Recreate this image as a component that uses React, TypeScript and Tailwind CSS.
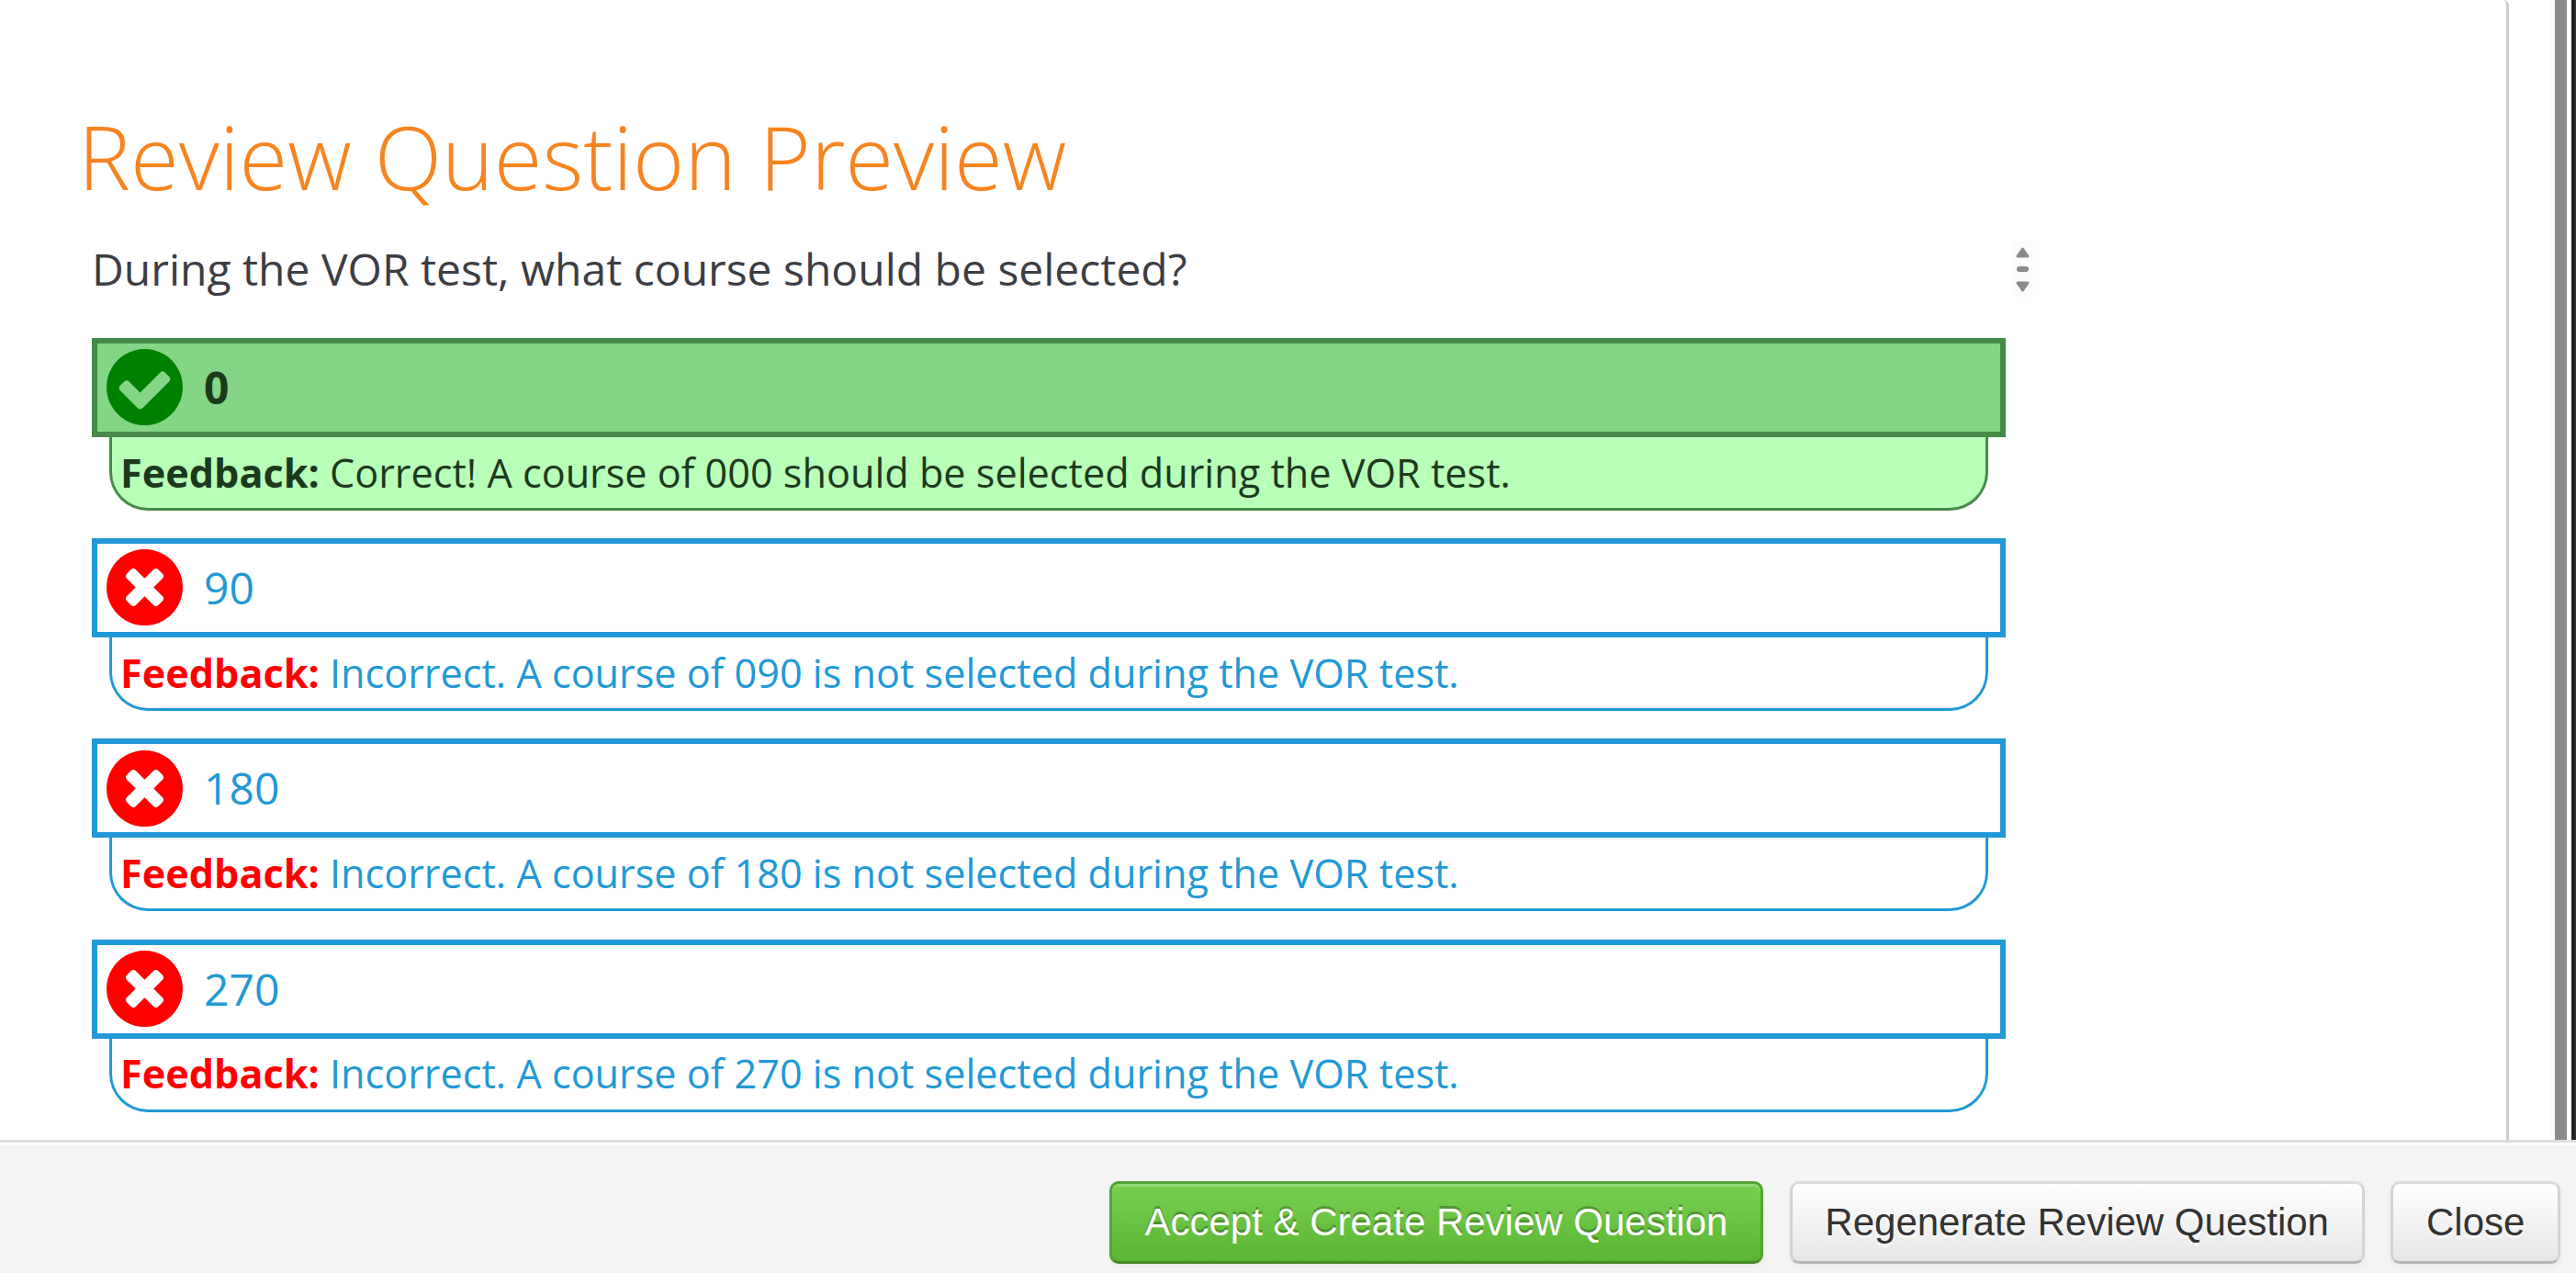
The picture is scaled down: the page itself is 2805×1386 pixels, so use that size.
import React from 'react';

interface Answer {
  label: string;
  feedback: string;
  correct: boolean;
}

const answers: Answer[] = [
  { label: '0', feedback: 'Correct! A course of 000 should be selected during the VOR test.', correct: true },
  { label: '90', feedback: 'Incorrect. A course of 090 is not selected during the VOR test.', correct: false },
  { label: '180', feedback: 'Incorrect. A course of 180 is not selected during the VOR test.', correct: false },
  { label: '270', feedback: 'Incorrect. A course of 270 is not selected during the VOR test.', correct: false },
];

const CheckCircle: React.FC = () => (
  <svg viewBox="128 128 1536 1536" className="w-[83px] h-[83px] -mt-[0.5px] shrink-0 fill-[#008000]">
    <path d="M1412 734q0-28-18-46l-91-90q-19-19-45-19t-45 19l-408 407-226-226q-19-19-45-19t-45 19l-91 90q-18 18-18 46 0 27 18 45l362 362q19 19 45 19 27 0 46-19l543-543q18-18 18-45zm252 162q0 209-103 385.5t-279.5 279.5-385.5 103-385.5-103-279.5-279.5-103-385.5 103-385.5 279.5-279.5 385.5-103 385.5 103 279.5 279.5 103 385.5z" />
  </svg>
);

const TimesCircle: React.FC = () => (
  <svg viewBox="128 128 1536 1536" className="w-[83px] h-[83px] -mt-[0.5px] shrink-0 fill-[#ff0000]">
    <path d="M1277 1122q0-26-19-45l-181-181 181-181q19-19 19-45 0-27-19-46l-90-90q-19-18-46-18-26 0-45 18l-181 181-181-181q-19-18-45-18-27 0-46 18l-90 90q-19 19-19 46 0 26 19 45l181 181-181 181q-19 19-19 45 0 27 19 46l90 90q19 18 46 18 26 0 45-18l181-181 181 181q19 18 45 18 27 0 46-18l90-90q19-19 19-46zm387-226q0 209-103 385.5t-279.5 279.5-385.5 103-385.5-103-279.5-279.5-103-385.5 103-385.5 279.5-279.5 385.5-103 385.5 103 279.5 279.5 103 385.5z" />
  </svg>
);

const DragHandle: React.FC = () => (
  <svg viewBox="0 0 23 60" className="w-[23px] h-[60px] bg-[#fcfcfc] fill-[#8b8b8b] stroke-[#8b8b8b]" strokeWidth="3" strokeLinejoin="round">
    <path d="M11.5 8L17 16H6z" />
    <path d="M11.5 53L17 45H6z" />
    <rect x="5" y="27" width="13" height="6" rx="3" stroke="none" />
  </svg>
);

const AnswerRow: React.FC<{ answer: Answer }> = ({ answer }) => {
  const { correct } = answer;
  return (
    <div className="w-[2084px]">
      <div
        className={`h-[108px] border-[6px] pl-[10px] flex items-center gap-[23px] text-[48px] ${
          correct ? 'border-[#468a48] bg-[#84d586] text-[#1b3a1b] font-bold' : 'border-[#2199d5] text-[#2199d5]'
        }`}
      >
        {correct ? <CheckCircle /> : <TimesCircle />}
        <span>{answer.label}</span>
      </div>
      <div
        className={`h-20 mx-[19px] border-[3px] border-t-0 rounded-b-[42px] pl-[9px] pt-[1.4px] flex items-center text-[43.2px] whitespace-pre ${
          correct ? 'border-[#468a48] bg-[#b8ffb8] text-[#1b3a1b]' : 'border-[#2199d5] text-[#2199d5]'
        }`}
      >
        <p>
          <b className={correct ? 'font-bold' : 'font-bold text-[#ff0000]'}>Feedback:</b> {answer.feedback}
        </p>
      </div>
    </div>
  );
};

const greyButton =
  'h-[90px] shrink-0 rounded-[10px] border-[3px] border-t-[#dcdcdc] border-x-[#d3d3d3] border-b-[#b6b6b6] bg-linear-to-b from-white to-[#e6e6e6] bg-clip-padding text-[#333] [text-shadow:0_3px_3px_rgba(255,255,255,0.75)] shadow-[0_3px_6px_rgba(0,0,0,0.05)]';

const App: React.FC = () => {
  return (
    <div className="w-[2805px] h-[1386px] overflow-hidden flex flex-col bg-white font-['Open_Sans',sans-serif]">
      <div className="h-[1241px] flex">
        <main className="w-[2732px] shrink-0 border-r-[3px] border-[#cccccc] rounded-tr-[6px] pt-[122px] pl-[85px] bg-white">
          <h1 className="text-[96px] leading-none font-light text-[#f68420] whitespace-nowrap">Review Question Preview</h1>
          <div className="mt-[45px] ml-[15px] w-[2114px] h-[60px] flex items-center justify-between">
            <p className="text-[48px] text-[#3d3d44]">During the VOR test, what course should be selected?</p>
            <DragHandle />
          </div>
          <div className="mt-[45px] ml-[15px] flex flex-col gap-[30.2px]">
            {answers.map((answer) => (
              <AnswerRow key={answer.label} answer={answer} />
            ))}
          </div>
        </main>
        <div className="w-[68px] pl-[45px] flex">
          <div className="w-[5px] bg-[#fbfbfb]" />
          <div className="w-[13px] bg-[#8b8b8b]" />
        </div>
        <div className="grow bg-[#2d2c2b] border-l-[3px] border-[#1e1e1e]" />
      </div>

      <footer className="h-[145px] border-t-[3px] border-[#dddddd]">
        <div className="h-full border-t-[3px] border-white bg-[#f4f4f4] pt-[39px] pr-[17px] flex justify-end gap-[28.6px] font-['Liberation_Sans',sans-serif] text-[42px] leading-[84px]">
          <button className="h-[90px] w-[712px] shrink-0 rounded-[10px] border-[3px] border-t-[#54a333] border-x-[#54a333] border-b-[#478a28] bg-linear-to-b from-[#78d051] to-[#5bb432] text-white [text-shadow:0_-3px_0_rgba(0,0,0,0.25)] shadow-[inset_0_3px_0_rgba(255,255,255,0.2),0_3px_6px_rgba(0,0,0,0.05)]">
            Accept &amp; Create Review Question
          </button>
          <button className={`${greyButton} w-[626.3px]`}>Regenerate Review Question</button>
          <button className={`${greyButton} w-[184.6px]`}>Close</button>
        </div>
      </footer>
    </div>
  );
};

export default App;
